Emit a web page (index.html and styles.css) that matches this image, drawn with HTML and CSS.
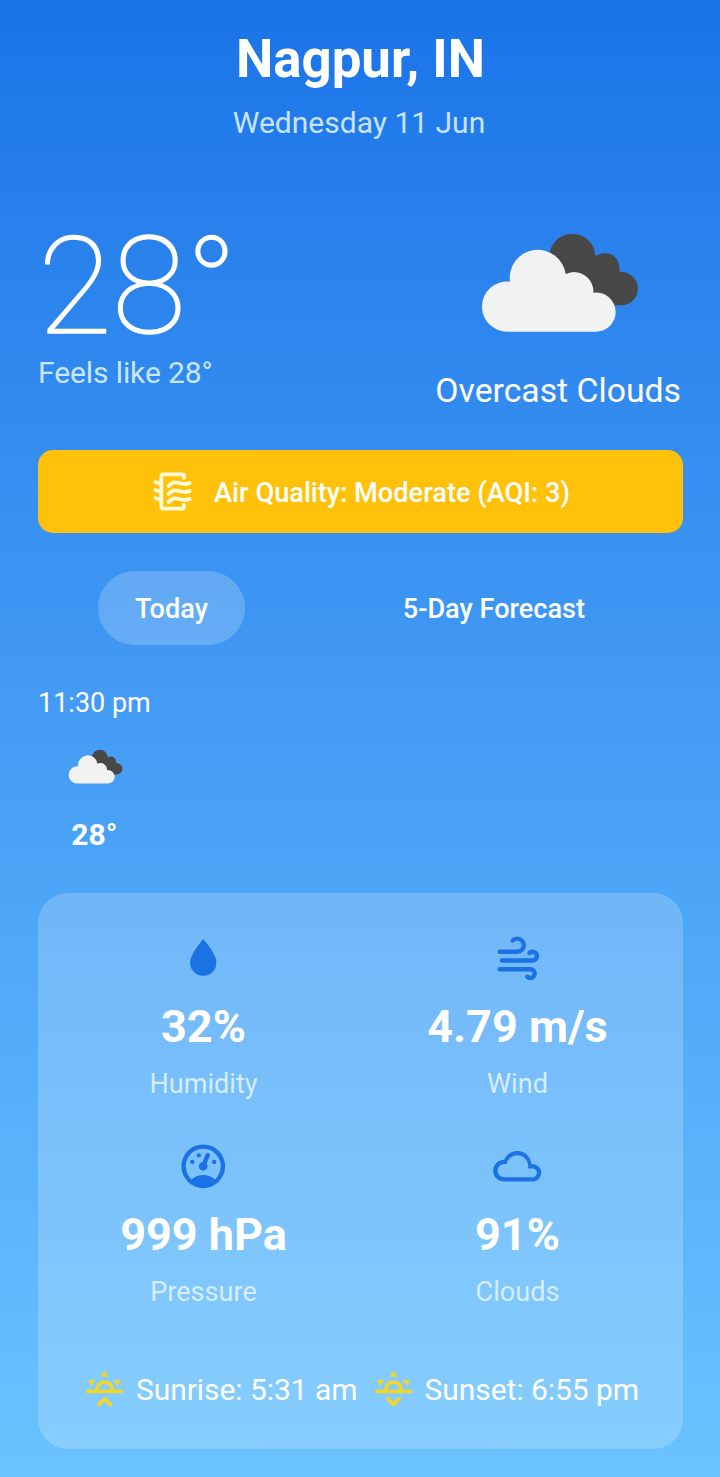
FILE: index.html
```html
<!DOCTYPE html>
<html lang="en">
<head>
<meta charset="utf-8">
<title>Nagpur Weather</title>
<link rel="stylesheet" href="styles.css">
</head>
<body>
<svg class="defs" width="0" height="0">
  <symbol id="overcast" viewBox="0 0 591 390">
    <g fill="#484848"><circle cx="337" cy="110" r="69"/><circle cx="435" cy="142" r="43"/><circle cx="484" cy="206" r="50"/><path d="M300 110L405 105L480 150L484 256H330Z"/></g>
    <path fill="#f2f2f2" d="M141 335A75 75 0 0 1 66 260A75 75 0 0 1 150 185A84 84 0 0 1 317 162A58 58 0 0 1 400 218A59 59 0 0 1 467 276A59 59 0 0 1 408 335Z"/>
  </symbol>
</svg>
<main class="app">
  <header class="header">
    <h1 class="city">Nagpur, IN</h1>
    <p class="date">Wednesday 11 Jun</p>
  </header>

  <section class="current">
    <div class="current-temp">
      <div class="temp">28°</div>
      <div class="feels">Feels like 28°</div>
    </div>
    <div class="condition">
      <svg class="condition-icon"><use href="#overcast"/></svg>
      <div class="condition-text">Overcast Clouds</div>
    </div>
  </section>

  <section class="aqi">
    <svg class="aqi-icon" viewBox="30 26 135 135" fill="none" stroke="#fffbd8" stroke-width="11.500" stroke-linecap="round" stroke-linejoin="round">
      <path d="M132 52V49Q132 42 125 42H71Q64 42 64 49V138Q64 145 71 145H125Q132 145 132 138V134"/>
      <path d="M86 77C94 67 106 64 118 68S138 73 149 68M86 101C94 91 106 88 118 92S138 97 149 92M86 125C94 115 106 112 118 116S138 121 149 116"/>
      <path d="M46 65Q52 69 62 70M46 89Q52 93 62 94M46 113Q52 117 62 118"/>
    </svg>
    <span class="aqi-text">Air Quality: Moderate (AQI: 3)</span>
  </section>

  <nav class="tabs">
    <button class="tab active">Today</button>
    <button class="tab">5-Day Forecast</button>
  </nav>

  <section class="hourly">
    <div class="hour">
      <div class="hour-time">11:30 pm</div>
      <svg class="hour-icon"><use href="#overcast"/></svg>
      <div class="hour-temp">28°</div>
    </div>
  </section>

  <section class="details">
    <div class="grid">
      <div class="detail">
        <svg class="detail-icon" viewBox="0 0 24 24"><path d="M12,20A6,6 0 0,1 6,14C6,10 12,3.25 12,3.25C12,3.25 18,10 18,14A6,6 0 0,1 12,20Z"/></svg>
        <div class="value">32%</div>
        <div class="label">Humidity</div>
      </div>
      <div class="detail">
        <svg class="detail-icon" viewBox="0 0 24 24"><path d="M4,10A1,1 0 0,1 3,9A1,1 0 0,1 4,8H12A2,2 0 0,0 14,6A2,2 0 0,0 12,4C11.45,4 10.95,4.22 10.59,4.59C10.2,5 9.56,5 9.17,4.59C8.78,4.2 8.78,3.56 9.17,3.17C9.9,2.45 10.9,2 12,2A4,4 0 0,1 16,6A4,4 0 0,1 12,10H4M19,12A1,1 0 0,0 20,11A1,1 0 0,0 19,10C18.72,10 18.47,10.11 18.29,10.29C17.9,10.68 17.27,10.68 16.88,10.29C16.5,9.9 16.5,9.27 16.88,8.88C17.42,8.34 18.17,8 19,8A3,3 0 0,1 22,11A3,3 0 0,1 19,14H5A1,1 0 0,1 4,13A1,1 0 0,1 5,12H19M18,18H4A1,1 0 0,1 3,17A1,1 0 0,1 4,16H18A3,3 0 0,1 21,19A3,3 0 0,1 18,22C17.17,22 16.42,21.66 15.88,21.12C15.5,20.73 15.5,20.1 15.88,19.71C16.27,19.32 16.9,19.32 17.29,19.71C17.47,19.89 17.72,20 18,20A1,1 0 0,0 19,19A1,1 0 0,0 18,18Z"/></svg>
        <div class="value">4.79 m/s</div>
        <div class="label">Wind</div>
      </div>
      <div class="detail">
        <svg class="detail-icon" viewBox="0 0 24 24"><path d="M12,2A10,10 0 0,0 2,12A10,10 0 0,0 12,22A10,10 0 0,0 22,12A10,10 0 0,0 12,2M12,4A8,8 0 0,1 20,12C20,14.4 19,16.5 17.3,18C15.9,16.7 14,16 12,16C10,16 8.2,16.7 6.7,18C5,16.5 4,14.4 4,12A8,8 0 0,1 12,4M14,5.89C13.62,5.9 13.26,6.15 13.1,6.54L11.81,9.77L11.71,10C11,10.13 10.41,10.6 10.14,11.26C9.73,12.29 10.23,13.45 11.26,13.86C12.29,14.27 13.45,13.77 13.86,12.74C14.12,12.08 14,11.32 13.57,10.76L13.67,10.5L14.96,7.29L14.97,7.26C15.17,6.75 14.92,6.17 14.41,5.96C14.28,5.91 14.15,5.89 14,5.89M10,6A1,1 0 0,0 9,7A1,1 0 0,0 10,8A1,1 0 0,0 11,7A1,1 0 0,0 10,6M7,9A1,1 0 0,0 6,10A1,1 0 0,0 7,11A1,1 0 0,0 8,10A1,1 0 0,0 7,9M17,9A1,1 0 0,0 16,10A1,1 0 0,0 17,11A1,1 0 0,0 18,10A1,1 0 0,0 17,9Z"/></svg>
        <div class="value">999 hPa</div>
        <div class="label">Pressure</div>
      </div>
      <div class="detail">
        <svg class="detail-icon" viewBox="0 0 24 24"><path d="M6,19A5,5 0 0,1 1,14A5,5 0 0,1 6,9C7,6.65 9.3,5 12,5C15.43,5 18.24,7.66 18.5,11.03L19,11A4,4 0 0,1 23,15A4,4 0 0,1 19,19H6M19,13H17V12A5,5 0 0,0 12,7C9.5,7 7.45,8.82 7.06,11.19C6.73,11.07 6.37,11 6,11A3,3 0 0,0 3,14A3,3 0 0,0 6,17H19A2,2 0 0,0 21,15A2,2 0 0,0 19,13Z"/></svg>
        <div class="value">91%</div>
        <div class="label">Clouds</div>
      </div>
    </div>
    <div class="sun">
      <div class="sun-item">
        <svg class="sun-icon" viewBox="0 0 24 24"><path d="M3,12H7A5,5 0 0,1 12,7A5,5 0 0,1 17,12H21A1,1 0 0,1 22,13A1,1 0 0,1 21,14H3A1,1 0 0,1 2,13A1,1 0 0,1 3,12M15,12A3,3 0 0,0 12,9A3,3 0 0,0 9,12H15M12,2L14.39,5.42C13.65,5.15 12.84,5 12,5C11.16,5 10.35,5.15 9.61,5.42L12,2M3.34,7L7.5,6.65C6.9,7.16 6.36,7.78 5.94,8.5C5.5,9.24 5.25,10 5.11,10.79L3.34,7M20.65,7L18.88,10.79C18.74,10 18.47,9.23 18.05,8.5C17.63,7.78 17.1,7.15 16.5,6.64L20.65,7M12.71,16.3L15.82,19.41C16.21,19.8 16.21,20.43 15.82,20.82C15.43,21.21 14.8,21.21 14.41,20.82L12,18.41L9.59,20.82C9.2,21.21 8.57,21.21 8.18,20.82C7.79,20.43 7.79,19.8 8.18,19.41L11.29,16.3C11.5,16.1 11.74,16 12,16C12.26,16 12.5,16.1 12.71,16.3Z"/></svg>
        <span>Sunrise: 5:31 am</span>
      </div>
      <div class="sun-item">
        <svg class="sun-icon" viewBox="0 0 24 24"><path d="M3,12H7A5,5 0 0,1 12,7A5,5 0 0,1 17,12H21A1,1 0 0,1 22,13A1,1 0 0,1 21,14H3A1,1 0 0,1 2,13A1,1 0 0,1 3,12M15,12A3,3 0 0,0 12,9A3,3 0 0,0 9,12H15M12,2L14.39,5.42C13.65,5.15 12.84,5 12,5C11.16,5 10.35,5.15 9.61,5.42L12,2M3.34,7L7.5,6.65C6.9,7.16 6.36,7.78 5.94,8.5C5.5,9.24 5.25,10 5.11,10.79L3.34,7M20.65,7L18.88,10.79C18.74,10 18.47,9.23 18.05,8.5C17.63,7.78 17.1,7.15 16.5,6.64L20.65,7M12.71,20.71L15.82,17.6C16.21,17.21 16.21,16.57 15.82,16.18C15.43,15.79 14.8,15.79 14.41,16.18L12,18.59L9.59,16.18C9.2,15.79 8.57,15.79 8.18,16.18C7.79,16.57 7.79,17.21 8.18,17.6L11.29,20.71C11.5,20.9 11.74,21 12,21C12.26,21 12.5,20.9 12.71,20.71Z"/></svg>
        <span>Sunset: 6:55 pm</span>
      </div>
    </div>
  </section>
</main>
</body>
</html>
```
FILE: styles.css
```css
* { box-sizing: border-box; margin: 0; padding: 0; }
body { font-family: Roboto, "Liberation Sans", sans-serif; color: #fff; }
.defs { position: absolute; }
svg { display: block; flex: none; }
.app {
  width: 720px;
  height: 1477px;
  padding: 28px 37.5px 0;
  background: linear-gradient(#1b74e8, #459df5 50%, #6ac3ff);
  white-space: nowrap;
}
.header { text-align: center; }
.city { padding-left: 1px; font-size: 52.8px; line-height: 62px; font-weight: 700; }
.date { margin-top: 15px; padding-right: 2px; font-size: 30px; line-height: 36px; color: #c8e3fb; }
.current { display: flex; justify-content: space-between; margin-top: 74px; height: 195px; }
.current-temp { padding: 2px 0 0 0.5px; }
.temp { font-size: 135px; line-height: 140px; font-weight: 100; -webkit-text-stroke: 1.4px #fff; }
.feels { margin-top: -2px; font-size: 30px; line-height: 36px; color: #c8e6fc; letter-spacing: -0.1px; }
.condition { display: flex; flex-direction: column; align-items: center; padding: 5px 1.5px 0 0; }
.condition-icon { width: 197px; height: 130px; }
.condition-text { margin-top: 21px; font-size: 33.75px; line-height: 40px; }
.aqi {
  display: flex; align-items: center; justify-content: center; gap: 19px;
  height: 83px; margin-top: 40px; border-radius: 15px; background: #ffc10a;
}
.aqi-icon { width: 45px; height: 45px; }
.aqi-text { padding-top: 3px; font-size: 27.2px; line-height: 32px; font-weight: 500; }
.tabs { display: flex; justify-content: space-around; margin-top: 38px; height: 74px; }
.tab {
  border: 0; background: none; padding: 2px 37px 0; border-radius: 37.5px;
  font: 500 27.1px/72px Roboto, "Liberation Sans", sans-serif; color: #fff;
}
.tab.active { background: rgba(255, 255, 255, 0.2); }
.hourly { display: flex; margin-top: 42px; height: 206px; padding-left: 0.5px; }
.hour { display: flex; flex-direction: column; align-items: center; }
.hour-time { font-size: 27px; line-height: 32px; }
.hour-icon { width: 68px; height: 45px; margin: 26px 0 0 2px; }
.hour-temp { margin-top: 27px; font-size: 30px; line-height: 36px; font-weight: 700; }
.details { height: 556px; padding: 39px 8px 0 9px; border-radius: 30px; background: rgba(255, 255, 255, 0.2); }
.grid { display: grid; grid-template-columns: 1fr 1fr; grid-auto-rows: 208px; }
.detail { display: flex; flex-direction: column; align-items: center; }
.detail-icon { width: 52.5px; height: 52.5px; fill: #1a72e3; }
.value { margin-top: 15px; font-size: 45px; line-height: 53px; font-weight: 700; }
.label { margin-top: 15px; font-size: 27.1px; line-height: 32px; color: #d5edff; }
.sun { display: flex; justify-content: center; gap: 13px; margin-top: 19px; }
.sun-item { display: flex; align-items: center; gap: 9px; font-size: 30px; line-height: 46px; letter-spacing: -0.05px; }
.sun-icon { width: 45px; height: 45px; margin-top: -2px; fill: #f0d52a; }
```
